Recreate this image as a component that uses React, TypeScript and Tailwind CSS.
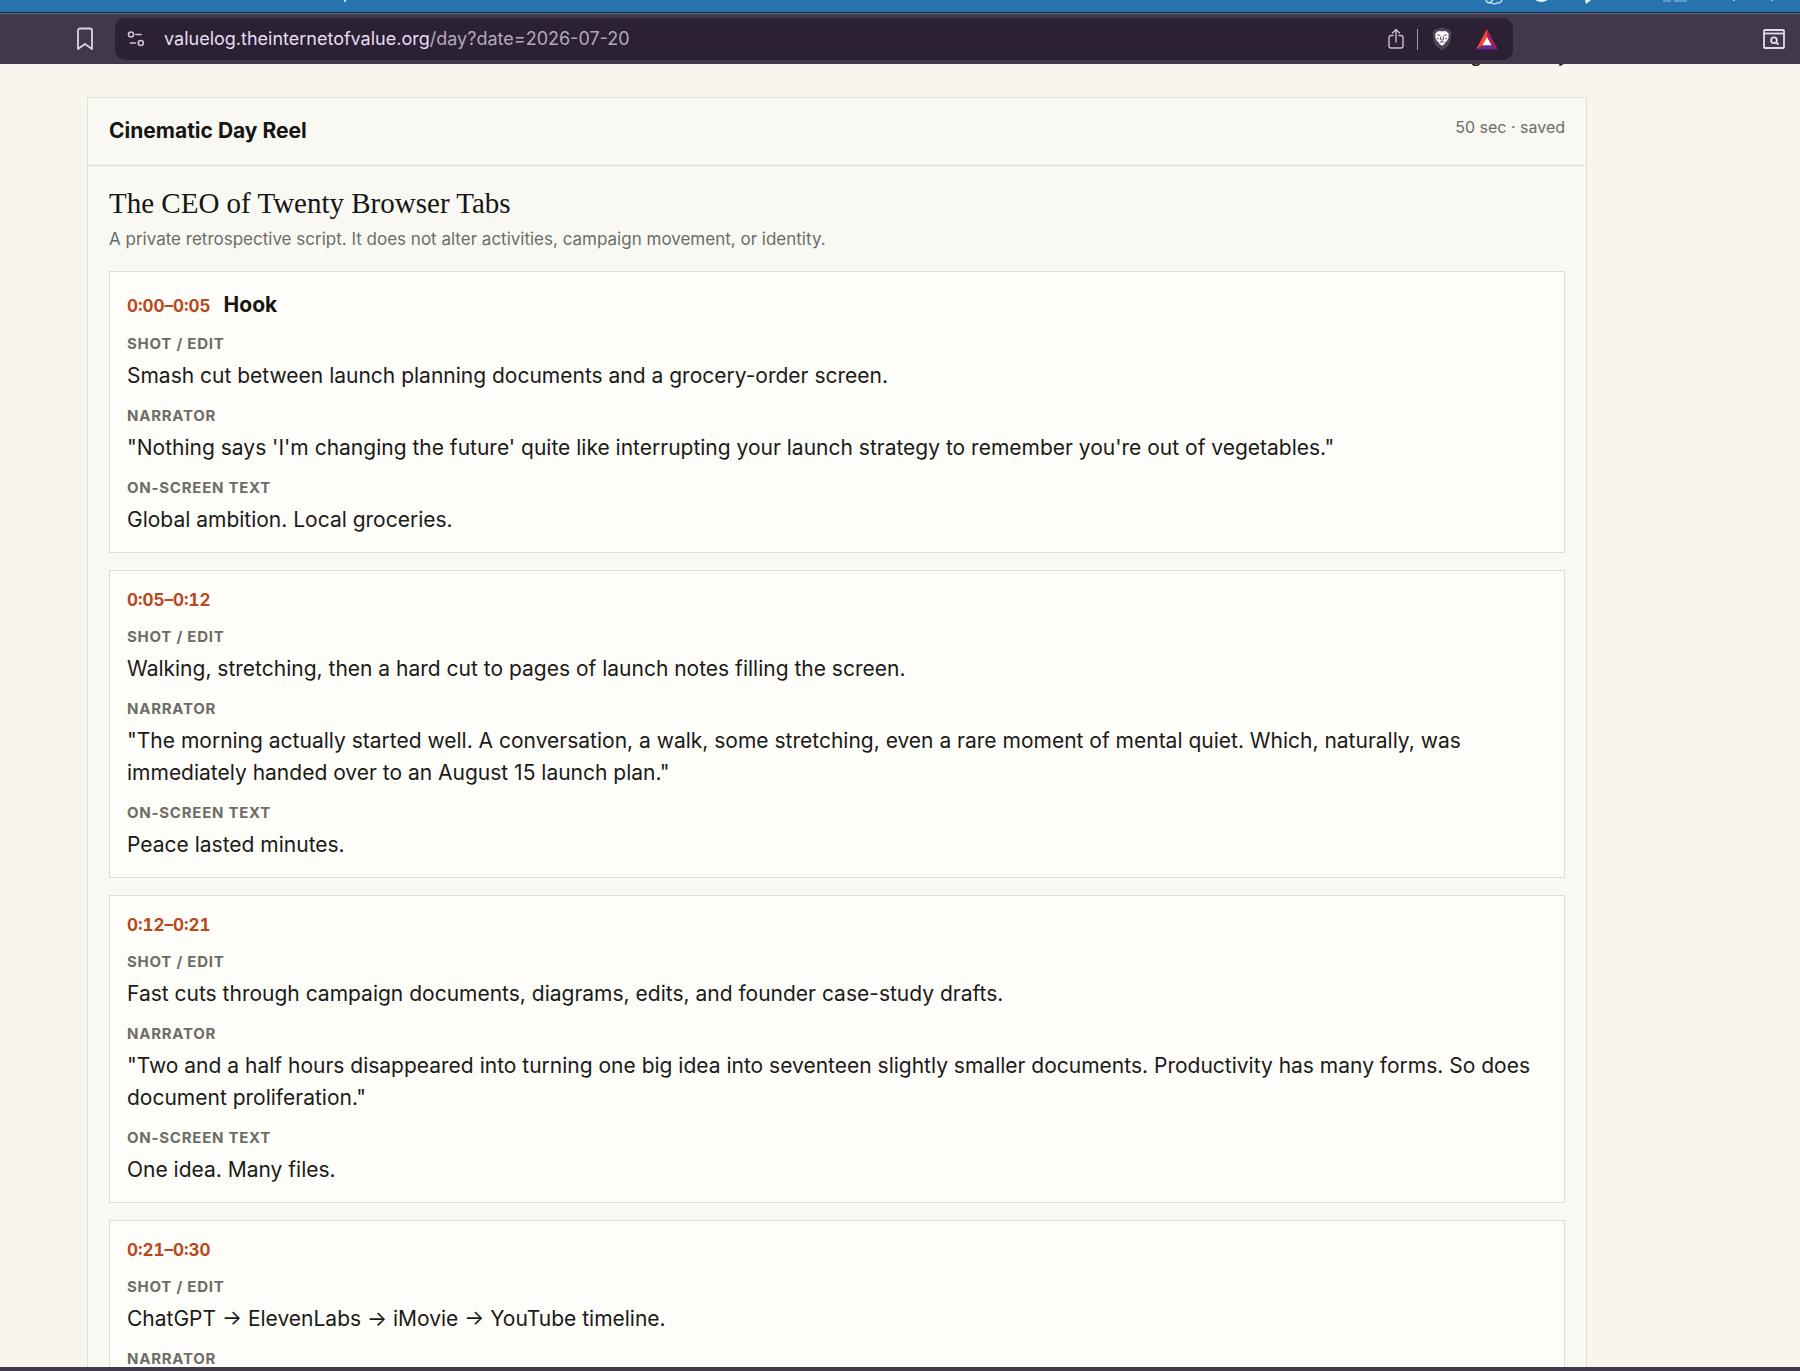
interface Scene {
  time: string;
  title?: string;
  shot: string;
  narrator: string;
  onScreen: string;
}

const SCENES: Scene[] = [
  {
    time: "0:00–0:05",
    title: "Hook",
    shot: "Smash cut between launch planning documents and a grocery-order screen.",
    narrator:
      "\"Nothing says 'I'm changing the future' quite like interrupting your launch strategy to remember you're out of vegetables.\"",
    onScreen: "Global ambition. Local groceries.",
  },
  {
    time: "0:05–0:12",
    shot: "Walking, stretching, then a hard cut to pages of launch notes filling the screen.",
    narrator:
      '"The morning actually started well. A conversation, a walk, some stretching, even a rare moment of mental quiet. Which, naturally, was immediately handed over to an August 15 launch plan."',
    onScreen: "Peace lasted minutes.",
  },
  {
    time: "0:12–0:21",
    shot: "Fast cuts through campaign documents, diagrams, edits, and founder case-study drafts.",
    narrator:
      '"Two and a half hours disappeared into turning one big idea into seventeen slightly smaller documents. Productivity has many forms. So does document proliferation."',
    onScreen: "One idea. Many files.",
  },
  {
    time: "0:21–0:30",
    shot: "ChatGPT → ElevenLabs → iMovie → YouTube timeline.",
    narrator: "",
    onScreen: "",
  },
];

function MenuBar() {
  return (
    <div className="h-[13px] shrink-0 flex justify-between overflow-hidden bg-[#2873ad] border-b border-[#1b2740]">
      <span className="ml-[344px] w-[2px] h-[2px] bg-[#b5e4f5]" />
      <svg width="320" height="12" viewBox="1480 0 320 12" fill="none" stroke="#c4e8f6" aria-hidden="true">
        <path d="M1486 -1q0 4 4 4q1 -2 3 -3M1490 2q4 3 7 1q5 0 5 -4" strokeWidth="1.3" />
        <path d="M1534 -1q7 6 15 0z" fill="#e4f6fc" stroke="none" />
        <path d="M1585 0h6l-5 4z" fill="#e4f6fc" stroke="none" />
        <path d="M1663 1h8M1674 1h13" strokeWidth="1.2" opacity="0.7" />
        <path d="M1733 -1l1 2M1771 -1l1 2" strokeWidth="1.4" />
      </svg>
    </div>
  );
}

function AddressBar() {
  return (
    <div className="h-[51px] shrink-0 flex items-center bg-[#41384a] border-t border-[#5f6c85] pl-[76px] pr-[15px]">
      <button type="button" aria-label="Bookmark" className="text-[#dcd3e4]">
        <svg width="18" height="24" viewBox="0 0 18 24" fill="none" stroke="currentColor" strokeWidth="1.8" strokeLinejoin="round">
          <path d="M2 3.500A2 2 0 0 1 4 1.500H14A2 2 0 0 1 16 3.500V22L9 17L2 22Z" />
        </svg>
      </button>
      <div className="ml-[21px] w-[1398px] min-w-0 h-[42px] rounded-[10px] bg-[#2c2034] flex items-center pl-3 pr-[15px]">
        <button type="button" aria-label="Site settings" className="text-[#cfc5d6]">
          <svg width="18" height="20" viewBox="0 0 18 20" fill="none" stroke="currentColor" strokeWidth="1.6" strokeLinecap="round">
            <circle cx="4" cy="5.5" r="2.5" />
            <path d="M8.800 5.500H14M3.500 14h5" />
            <circle cx="13.8" cy="14" r="2.5" />
          </svg>
        </button>
        <span className="ml-[19px] flex-1 min-w-0 truncate text-[18px] leading-6 text-[#b3a9ba]">
          <span className="text-[#e6def0]">valuelog.theinternetofvalue.org</span>/day?date=2026-07-20
        </span>
        <button type="button" aria-label="Share" className="text-[#c9c0d0]">
          <svg width="16" height="22" viewBox="0 0 16 22" fill="none" stroke="currentColor" strokeWidth="1.4" strokeLinecap="round" strokeLinejoin="round">
            <path d="M5 7.500H3a2 2 0 0 0-2 2V18a2 2 0 0 0 2 2h10a2 2 0 0 0 2-2V9.500a2 2 0 0 0-2-2h-2" />
            <path d="M8 14V1.500M4.500 5L8 1.500L11.500 5" />
          </svg>
        </button>
        <span className="mx-[13px] w-px h-[21px] bg-[#a198a9]" />
        <button type="button" aria-label="Shields">
          <svg width="22" height="24" viewBox="0 0 22 24">
            <path d="M11 0.500L14.500 1.800L18.500 2.500L20.500 6L19 15.500L16.500 19.500L11 23.500L5.500 19.500L3 15.500L1.500 6L3.500 2.500L7.500 1.800Z" fill="#4e4557" />
            <path d="M6.500 4.500L9 3.900L11 4.400L13 3.900L15.500 4.500L18 7L17.300 8.800L17.700 10.500L16 14L14.200 15.200L13.800 16.800L11 18.800L8.200 16.800L7.800 15.200L6 14L4.300 10.500L4.700 8.800L4 7Z" fill="#fff" />
            <path d="M6.300 7.600L9.300 8.700M15.700 7.600L12.700 8.700M9.800 9.500L9.500 12.300L11 13.200L12.500 12.300L12.200 9.500M6 11L7.800 12.200M16 11L14.200 12.200M8.800 15.500L11 14.500L13.200 15.500" fill="none" stroke="#3b3044" strokeWidth="0.9" />
          </svg>
        </button>
        <button type="button" aria-label="Rewards" className="ml-[23px]">
          <svg width="22" height="21" viewBox="0 0 22 21">
            <path d="M11 0L0 20.500L7 16L11 8z" fill="#ff4724" />
            <path d="M11 0L22 20.500L15 16L11 8z" fill="#9e1f63" />
            <path d="M0 20.500h22L15 16H7z" fill="#662d91" />
            <path d="M11 8L6.500 16.300h9z" fill="#fff" />
          </svg>
        </button>
      </div>
      <button type="button" aria-label="Search tabs" className="ml-auto text-[#e3dcea]">
        <svg width="22" height="20" viewBox="0 0 22 20" fill="none" stroke="currentColor" strokeWidth="1.8">
          <rect x="1" y="1" width="20" height="18" rx="1" />
          <path d="M1 4.500h20" />
          <circle cx="11" cy="11.200" r="2.900" />
          <path d="M13.200 13.400l2.300 2.300" />
        </svg>
      </button>
    </div>
  );
}

function Field({ label, text }: { label: string; text: string }) {
  return (
    <div className="mt-3">
      <h4 className="text-[15px] leading-6 font-bold tracking-wider uppercase text-[#6d6c66]">{label}</h4>
      <p className="mt-1 min-h-8 text-[21px] leading-8 text-[#1a1a18]">{text}</p>
    </div>
  );
}

function SceneCard({ scene }: { scene: Scene }) {
  return (
    <article className="border border-[#dddcd5] bg-[#fefdf9] px-[17px] pt-[17px] pb-4">
      <header className="flex items-baseline gap-[13px]">
        <time className="text-[17px] leading-[25px] font-bold tabular-nums text-[#b8491c]">{scene.time}</time>
        {scene.title && <h3 className="text-[21px] leading-[31px] font-bold text-[#151513]">{scene.title}</h3>}
      </header>
      <Field label="Shot / Edit" text={scene.shot} />
      <Field label="Narrator" text={scene.narrator} />
      <Field label="On-screen text" text={scene.onScreen} />
    </article>
  );
}

export default function App() {
  return (
    <div className="h-screen flex flex-col overflow-hidden bg-[#f8f5ed] font-['Inter',sans-serif]">
      <MenuBar />
      <AddressBar />
      <main className="flex-1 min-h-0 overflow-hidden pl-[87px] pr-[213px]">
        {/* Tail of the line scrolled under the toolbar */}
        <div className="h-[33px] flex justify-end gap-[76px] pr-[19px] text-[18px] leading-6 font-medium text-[#1a1a18]">
          <span className="-mt-5">g</span>
          <span className="-mt-5">y</span>
        </div>
        <section className="border border-[#e1dfd7] bg-[#f9f8f3]">
          <header className="h-[68px] flex justify-between px-[21px] pt-[17px] border-b border-[#dddcd5]">
            <h2 className="text-[21px] leading-8 font-bold text-[#151513]">Cinematic Day Reel</h2>
            <span className="text-[16px] leading-6 text-[#6d6c66]">50 sec · saved</span>
          </header>
          <div className="px-[21px] pt-[21px]">
            <h3 className="text-[29px] leading-8 font-['Liberation_Serif',serif] text-[#151513]">
              The CEO of Twenty Browser Tabs
            </h3>
            <p className="mt-2 text-[17px] leading-6 text-[#6d6c66]">
              A private retrospective script. It does not alter activities, campaign movement, or identity.
            </p>
            <div className="mt-5 flex flex-col gap-[17px]">
              {SCENES.map((scene) => (
                <SceneCard key={scene.time} scene={scene} />
              ))}
            </div>
          </div>
        </section>
      </main>
      <div className="h-1 shrink-0 bg-[#41384a]" />
    </div>
  );
}
